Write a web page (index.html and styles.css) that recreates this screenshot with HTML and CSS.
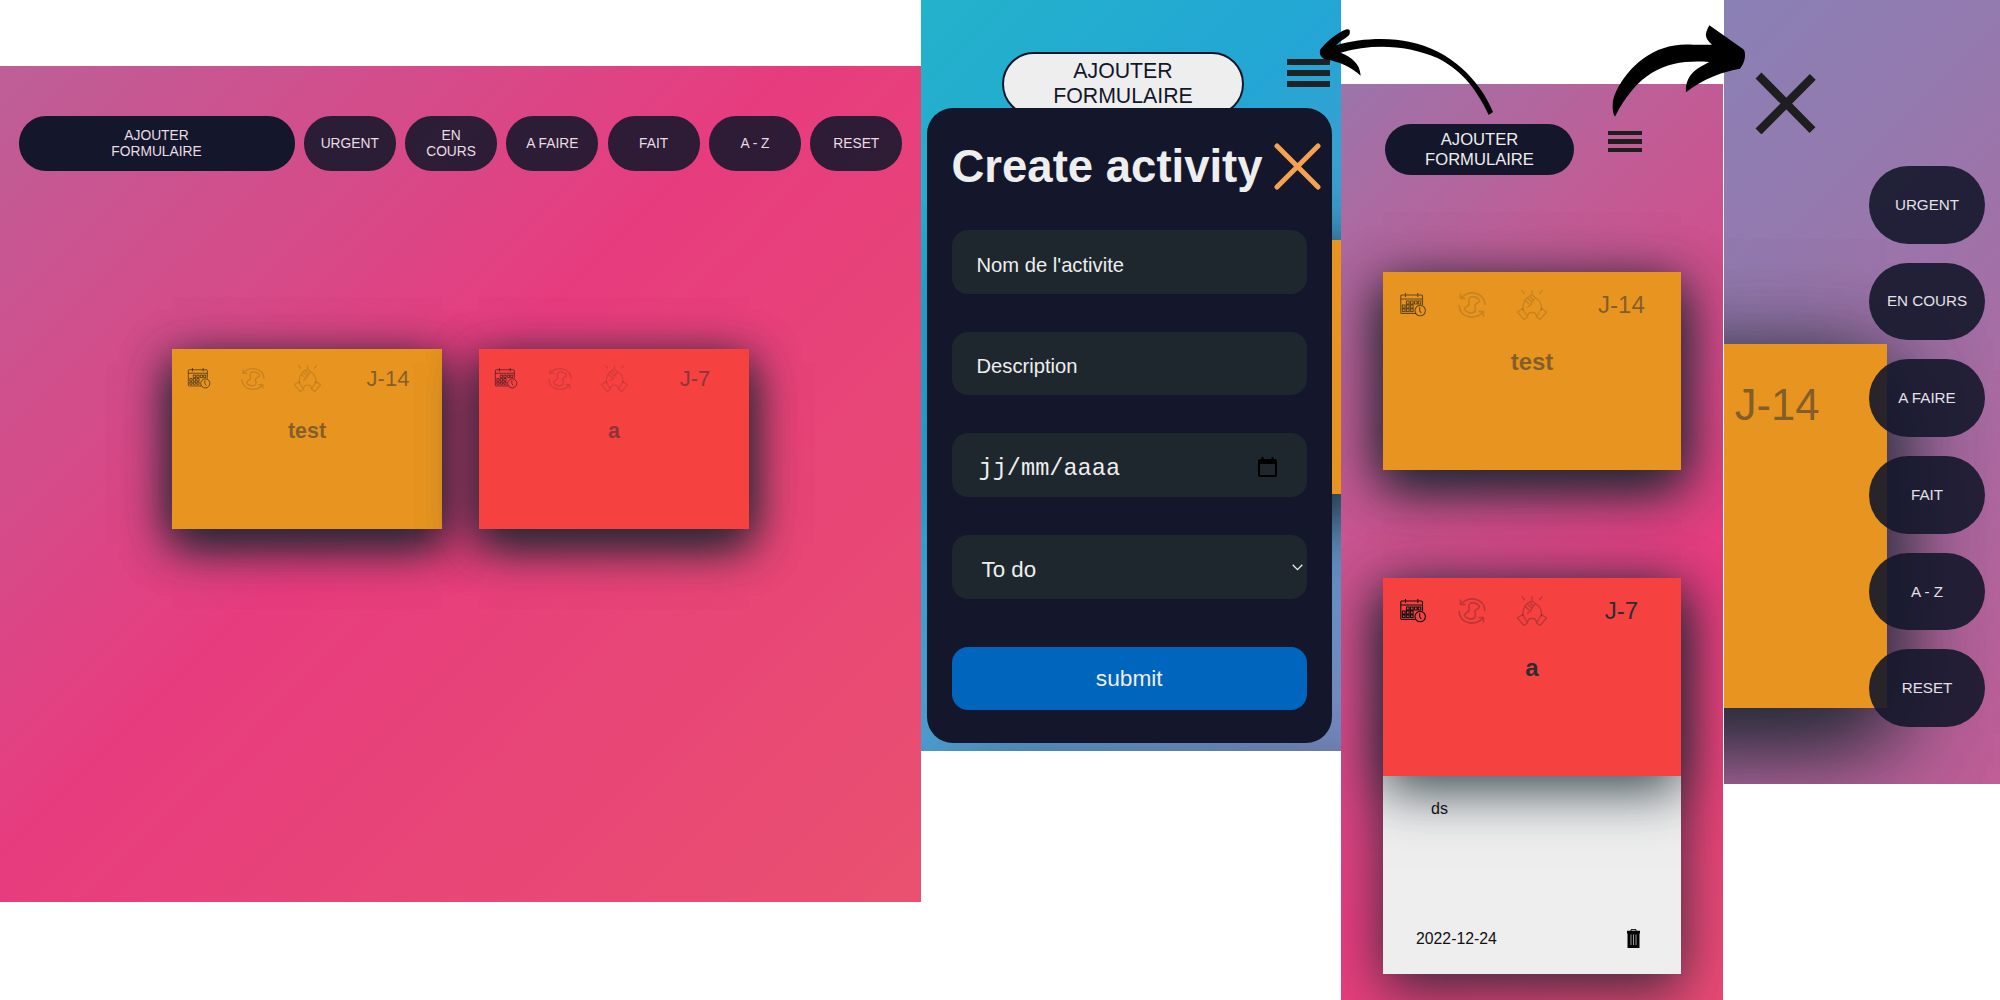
FILE: index.html
```html
<!DOCTYPE html>
<html lang="fr">
<head>
<meta charset="utf-8">
<title>Todo</title>
<link rel="stylesheet" href="styles.css">
</head>
<body>
<svg class="defs" aria-hidden="true">
  <symbol id="calendar" viewBox="0 0 26 24">
    <g fill="none" stroke="currentColor" stroke-width="1.1">
      <path d="M16 20.500H1.800a1 1 0 0 1-1-1V3a1 1 0 0 1 1-1H21.500a1 1 0 0 1 1 1v9M.8 6h21.700M5.500 0v4M17.800 0v4"/>
      <path d="M6.500 8h2.600v3H6.500zM10.500 8h2.600v3h-2.600zM14.500 8h2.600v3h-2.600zM18.300 8h2.400v3h-2.400zM2.500 12h2.600v3H2.500zM6.500 12h2.600v3H6.500zM10.500 12h2.600v3h-2.600zM2.500 16h2.600v2.600H2.500zM6.500 16h2.600v2.600H6.500zM10.500 16h2.600v2.600h-2.600z"/>
      <circle cx="20.200" cy="17.600" r="5.200"/>
      <path d="M19.700 14v3.800l1.600 2.200"/>
    </g>
  </symbol>
  <symbol id="progress" viewBox="0 0 28 28">
    <g fill="none" stroke="currentColor" stroke-width="1.600" stroke-linejoin="round">
      <path d="M3 7.500C8-1 26-.5 27 14M25 20.500C20 29 2 28.500 1 14M2.500 2.500v5h5M25.500 25.500v-5h-5"/>
      <path d="M12 6.500c3-2 8 0 9.500 3 0 2.500-4 2.500-4.500 4.500s2 4.500-.5 7c-3 2-8.500.5-10-2.500 0-3 4-3 4.500-5s-1.500-5 1-7z"/>
    </g>
  </symbol>
  <symbol id="done" viewBox="0 0 30 30">
    <g fill="none" stroke="currentColor" stroke-width="1.300" stroke-linecap="round" stroke-linejoin="round">
      <path d="M5 .8l2.300 2.700M15 .8v3M25 .8l-2.300 2.700"/>
      <path d="M6 19.500C5.500 14 8 8 12.500 6c2-1.500 4-.5 5 1 4.500 2.500 7.500 7 7 12.500M9 11l3 3M11 8.500l3 3M13.500 7l2.500 3M18 7.500c-1 3-3.500 4-4 7-1 2-2.500 1-3.500 3"/>
      <path d="M5.500 18.500l-5 3.500 6.500 7.500 3.500-2.500zM24.500 18.500l5 3.500-6.500 7.500-3.500-2.500zM10.500 26c.5-2 1-3.500 3-3.500h3c2 0 2.500 1.500 3 3.500"/>
    </g>
  </symbol>
</svg>

<main class="board">
  <section class="panel desktop">
    <nav class="toolbar">
      <button class="pill add">AJOUTER<br>FORMULAIRE</button>
      <button class="pill">URGENT</button>
      <button class="pill">EN<br>COURS</button>
      <button class="pill">A FAIRE</button>
      <button class="pill">FAIT</button>
      <button class="pill">A - Z</button>
      <button class="pill">RESET</button>
    </nav>
    <div class="cards">
      <article class="card orange">
        <header class="card-head">
          <svg class="ic cal"><use href="#calendar"/></svg>
          <svg class="ic prog faint"><use href="#progress"/></svg>
          <svg class="ic hands faint"><use href="#done"/></svg>
          <span>J-14</span>
        </header>
        <h2>test</h2>
      </article>
      <article class="card red">
        <header class="card-head">
          <svg class="ic cal"><use href="#calendar"/></svg>
          <svg class="ic prog faint"><use href="#progress"/></svg>
          <svg class="ic hands faint"><use href="#done"/></svg>
          <span>J-7</span>
        </header>
        <h2>a</h2>
      </article>
    </div>
  </section>

  <section class="panel form-view">
    <div class="form-top">
      <button class="pill light">AJOUTER<br>FORMULAIRE</button>
      <div class="burger large"><i></i><i></i><i></i></div>
    </div>
    <div class="backdrop">
      <div class="card orange"></div>
      <div class="card red"></div>
    </div>
    <form class="modal">
      <div class="modal-head">
        <h1>Create activity</h1>
        <svg class="modal-close" viewBox="0 0 47 47"><path d="M3 3l41 41M44 3L3 44"/></svg>
      </div>
      <div class="field">Nom de l'activite</div>
      <div class="field">Description</div>
      <div class="field date">
        <span>jj/mm/aaaa</span>
        <svg class="date-icon" viewBox="0 0 19 20"><path fill-rule="evenodd" d="M3.500 0h2v2h8V0h2v2H17a2 2 0 0 1 2 2v14a2 2 0 0 1-2 2H2a2 2 0 0 1-2-2V4a2 2 0 0 1 2-2h1.500zM2 7v11h15V7z"/></svg>
      </div>
      <div class="field select">
        <span>To do</span>
        <svg class="chevron" viewBox="0 0 11 7"><path d="M.7.8l4.800 4.800L10.300.8"/></svg>
      </div>
      <button class="submit" type="button">submit</button>
    </form>
  </section>

  <section class="panel mobile">
    <div class="mobile-top">
      <button class="pill add">AJOUTER<br>FORMULAIRE</button>
      <div class="burger"><i></i><i></i><i></i></div>
    </div>
    <article class="card orange">
      <header class="card-head">
        <svg class="ic cal"><use href="#calendar"/></svg>
        <svg class="ic prog faint"><use href="#progress"/></svg>
        <svg class="ic hands faint"><use href="#done"/></svg>
        <span>J-14</span>
      </header>
      <h2>test</h2>
    </article>
    <div class="opened">
      <article class="card red active">
        <header class="card-head">
          <svg class="ic cal"><use href="#calendar"/></svg>
          <svg class="ic prog faint"><use href="#progress"/></svg>
          <svg class="ic hands faint"><use href="#done"/></svg>
          <span>J-7</span>
        </header>
        <h2>a</h2>
      </article>
      <div class="details">
        <p>ds</p>
        <footer>
          <time>2022-12-24</time>
          <svg class="trash" viewBox="0 0 13 19"><path d="M4 2V.6h5V2" fill="none" stroke="#111"/><path d="M0 1.800h13v2.700H0zM.5 4h12v15H.5z" fill="#050505"/><path d="M4 5.500v10.500M6.500 5.500v10.500M9 5.500v10.500" stroke="#aaa" stroke-width=".9"/></svg>
        </footer>
      </div>
    </div>
  </section>

  <section class="panel menu-view">
    <svg class="menu-close" viewBox="0 0 62 62"><path d="M3.500 3.500l54 54.600M57.800 4.900L3.500 59.500"/></svg>
    <article class="card orange">
      <header class="card-head"><span>J-14</span></header>
    </article>
    <nav class="menu">
      <button class="pill">URGENT</button>
      <button class="pill">EN COURS</button>
      <button class="pill">A FAIRE</button>
      <button class="pill">FAIT</button>
      <button class="pill">A - Z</button>
      <button class="pill">RESET</button>
    </nav>
  </section>

  <svg class="arrows" viewBox="0 0 1380 720">
    <path d="M30 150C45 130 80 98 110 88C122 85 121 98 117 106C104 118 88 124 78 136C150 114 240 112 300 126C420 150 510 240 549 336L536 345C500 270 460 215 384 175C290 135 190 130 92 158C125 172 150 190 152 227C125 203 90 185 45 178C32 172 28 162 30 150Z"/>
    <path d="M915 350C905 335 905 300 918 275C960 190 1040 125 1150 134L1206 134C1180 112 1186 100 1198 76L1300 148C1310 158 1305 190 1290 206C1240 215 1180 235 1128 277C1125 225 1160 205 1198 186C1080 178 990 205 915 350Z"/>
  </svg>
</main>
</body>
</html>
```
FILE: styles.css
```css
* { box-sizing: border-box; }

body {
  margin: 0;
  width: 2000px;
  height: 1000px;
  overflow: hidden;
  background: #fff;
  font-family: "Liberation Sans", Arial, sans-serif;
}

h1, h2, p { margin: 0; }
.defs { display: none; }

.board {
  position: relative;
  display: flex;
  align-items: flex-start;
  height: 1000px;
}

/* --pink is where the pink stop falls, --unit the distance from blue to pink */
.panel {
  position: relative;
  flex: none;
  overflow: hidden;
  background: linear-gradient(135deg,
    #23d5ab calc(var(--pink) - var(--unit) * 1.635),
    #23a6d5 calc(var(--pink) - var(--unit)),
    #4a9bcc calc(var(--pink) - var(--unit) * .88),
    #6f8abf calc(var(--pink) - var(--unit) * .74),
    #8a80b5 calc(var(--pink) - var(--unit) * .64),
    #9479ae calc(var(--pink) - var(--unit) * .55),
    #bd5f98 calc(var(--pink) - var(--unit) * .33),
    #e73c7e var(--pink),
    #ee7752 calc(var(--pink) + var(--unit) * 1.14));
}

/* buttons */
.pill {
  display: flex;
  align-items: center;
  justify-content: center;
  padding: 0;
  border: 0;
  border-radius: 27px;
  background: rgba(20, 23, 43, .88);
  color: #e9dde4;
  font: 13.8px/16px "Liberation Sans", Arial, sans-serif;
  text-align: center;
}
.pill.add { background: #14172b; }

.burger {
  display: flex;
  flex-direction: column;
  justify-content: space-between;
  width: 34px;
  height: 22px;
}
.burger i { height: 4.800px; background: #1e1e1e; }

/* cards */
.card {
  --shade: rgba(28, 38, 46, .84);
  flex: none;
  color: #222f3e;
  box-shadow: 0 14px 44px var(--shade), 0 14px 44px var(--shade);
}
.orange { background: #e79520; }
.red { background: #f64141; }

.card-head {
  display: grid;
  grid-template-columns: 1fr 1fr 1fr 2fr;
  align-items: center;
  justify-items: center;
  height: 33.333%;
}
.card-head span { grid-column: 4; padding-top: 1px; color: rgba(34, 40, 49, .5); }
.card h2 { text-align: center; color: rgba(34, 40, 49, .5); }
.ic { display: block; color: rgba(20, 20, 20, .6); }
.ic.faint { color: rgba(20, 20, 20, .14); }

/* desktop board */
.desktop {
  --pink: 566px;
  --unit: 1714px;
  width: 921px;
  height: 836px;
  margin-top: 66px;
  padding-top: 50px;
}
.toolbar {
  display: grid;
  grid-template-columns: 276px repeat(6, 92px);
  column-gap: 9.300px;
  height: 55px;
  padding-left: 18.500px;
}
.cards {
  display: flex;
  gap: 37px;
  margin-top: 178px;
  padding-left: 172px;
}
.cards .card { width: 270px; height: 180px; }
.desktop .card-head { font-size: 22px; }
.desktop h2 { font-size: 21.400px; line-height: 24px; padding-top: 10px; }
.desktop .cal { width: 24px; height: 21px; }
.desktop .prog { width: 24px; height: 24px; }
.desktop .hands { width: 27px; height: 27px; }

/* form */
.form-view {
  --pink: 2135px;
  --unit: 1838px;
  width: 420px;
  height: 751px;
}
.form-top {
  display: flex;
  height: 240px;
  padding: 51.500px 0 0 81px;
}
.pill.light {
  width: 242px;
  height: 64px;
  border: 2.500px solid #14172b;
  border-radius: 32px;
  background: #eee;
  color: #14172b;
  font-size: 21.300px;
  line-height: 25px;
}
.burger.large {
  width: 43px;
  height: 28px;
  margin: 7.500px 0 0 43px;
}
.burger.large i { height: 6px; background: #1c2226; }
.backdrop {
  display: flex;
  flex-direction: column;
  gap: 282px;
  padding-left: 54px;
}
.backdrop .card {
  width: 382px;
  height: 254px;
  box-shadow: 0 18px 60px var(--shade), 0 18px 60px var(--shade);
}
.modal {
  position: absolute;
  left: 5.500px;
  top: 108px;
  width: 405.500px;
  height: 634.500px;
  padding: 32px 25px 32px;
  display: flex;
  flex-direction: column;
  border-radius: 26px;
  background: #14172b;
  color: #eee;
}
.modal-head {
  display: flex;
  justify-content: space-between;
  margin-right: -14px;
  height: 90px;
}
.modal h1 { font-size: 45.500px; line-height: 54px; white-space: nowrap; }
.modal-close { width: 47px; height: 47px; margin-top: 3px; }
.modal-close path { stroke: #f5a151; stroke-width: 5; stroke-linecap: round; }
.field {
  display: flex;
  align-items: center;
  justify-content: space-between;
  height: 63.500px;
  margin-bottom: 38.200px;
  padding: 7px 30px 0 25px;
  border-radius: 16px;
  background: #1e272e;
  font-size: 20.200px;
}
.field.date {
  padding-left: 27px;
  font-family: "Liberation Mono", "Courier New", monospace;
  font-size: 23.600px;
}
.date-icon { width: 19px; height: 20px; margin-bottom: 4px; }
.field.select { padding: 7px 4px 0 30px; font-size: 22.300px; }
.chevron { width: 11px; height: 7px; margin-bottom: 6px; }
.chevron path { fill: none; stroke: #eee; stroke-width: 1.300; }
.submit {
  height: 63.500px;
  margin-top: 10px;
  border: 0;
  border-radius: 16px;
  background: #0065bd;
  color: #eee;
  font: 22.700px "Liberation Sans", Arial, sans-serif;
}

/* mobile list */
.mobile {
  --pink: 608px;
  --unit: 1174px;
  width: 382px;
  height: 916px;
  margin-top: 84px;
  padding: 40px 42px 0;
}
.mobile-top {
  display: flex;
  align-items: flex-start;
  height: 148px;
  padding-left: 2px;
}
.mobile-top .pill {
  width: 189px;
  height: 51px;
  color: #eee;
  font-size: 16.600px;
  line-height: 19.500px;
}
.mobile-top .burger { margin: 6.500px 0 0 34px; }
.mobile .card { width: 298px; height: 198px; }
.mobile > .card { box-shadow: 0 15px 50px var(--shade), 0 15px 50px var(--shade); }
.mobile .card-head { font-size: 24px; }
.mobile h2 { font-size: 24px; line-height: 28px; padding-top: 10px; }
.mobile .cal { width: 26px; height: 24px; }
.mobile .prog { width: 28px; height: 28px; }
.mobile .hands { width: 30px; height: 30px; }
.opened {
  margin-top: 108px;
  width: 298px;
  box-shadow: 0 14px 50px rgba(22, 38, 46, .85);
}
.mobile .card.active {
  position: relative;
  z-index: 1;
  box-shadow: 0 15px 50px rgba(22, 38, 46, .82);
}
.active .card-head span, .active h2 { color: #2b2d33; }
.active .ic { color: #111; }
.active .ic.faint { color: rgba(20, 20, 20, .25); }
.details {
  display: flex;
  flex-direction: column;
  justify-content: space-between;
  height: 198px;
  padding: 23px 41px 26px 33px;
  background: #eee;
  color: #111;
}
.details p { position: relative; z-index: 2; padding-left: 15px; font-size: 16px; line-height: 20px; }
.details footer { display: flex; justify-content: space-between; align-items: center; font-size: 15.800px; }
.trash { width: 13px; height: 19px; }

/* mobile menu */
.menu-view {
  --pink: 1457px;
  --unit: 2263px;
  width: 276px;
  height: 784px;
  margin-left: 1px;
}
.menu-close { display: block; width: 62px; height: 62px; margin: 72px 0 0 31px; }
.menu-close path { stroke: #1e1e1e; stroke-width: 8.300; }
.menu-view .card {
  width: 547px;
  height: 364px;
  margin: 210px 0 0 -384.500px;
  font-size: 43.600px;
  box-shadow: 0 26px 88px var(--shade), 0 26px 88px var(--shade);
}
.menu {
  position: absolute;
  top: 166px;
  right: 15px;
  display: flex;
  flex-direction: column;
  gap: 19.200px;
}
.menu .pill {
  width: 116px;
  height: 77.500px;
  border-radius: 39px;
  background: rgba(20, 23, 43, .9);
  color: #e4e0e6;
  font-size: 15.200px;
}

.arrows {
  position: absolute;
  left: 1310px;
  top: 0;
  width: 460px;
  height: 240px;
}
```
